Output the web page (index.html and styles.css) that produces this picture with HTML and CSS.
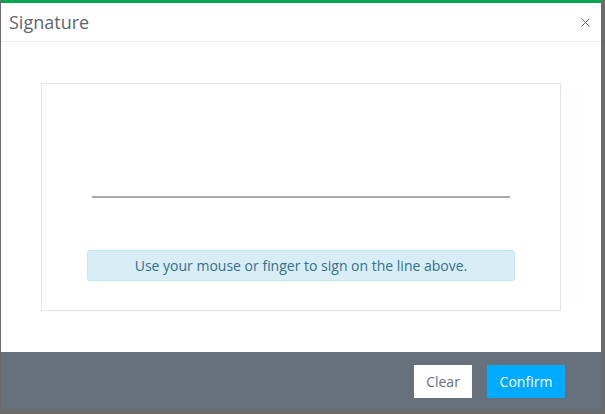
FILE: index.html
```html
<!DOCTYPE html>
<html lang="en">
<head>
  <meta charset="UTF-8">
  <title>Signature</title>
  <link rel="stylesheet" href="styles.css">
</head>
<body>
  <div class="modal">
    <div class="modal-header">
      <h4 class="modal-title">Signature</h4>
      <button class="close" aria-label="Close">
        <svg width="9" height="9" viewBox="0 0 9 9"><path d="M0.5 0.5L8.5 8.5M8.5 0.5L0.5 8.5" stroke="#666" stroke-width="1" fill="none"/></svg>
      </button>
    </div>
    <div class="modal-body">
      <div class="sign-box">
        <div class="sign-line"></div>
        <div class="alert-info">Use your mouse or finger to sign on the line above.</div>
      </div>
    </div>
    <div class="modal-footer">
      <button class="btn btn-clear">Clear</button>
      <button class="btn btn-confirm">Confirm</button>
    </div>
  </div>
</body>
</html>
```

FILE: styles.css
```css
body {
  margin: 0;
  background: #6b6b6b;
  font-family: 'Open Sans', sans-serif;
  height: 414px;
  overflow: hidden;
}
.modal {
  width: 600px;
  margin-left: 1px;
  background: #ffffff;
  border-top: 3px solid #00a651;
}
.modal-header {
  height: 38px;
  border-bottom: 1px solid #eeeeee;
  display: flex;
  align-items: center;
  justify-content: space-between;
  padding: 0 11px 0 8px;
}
.modal-title {
  margin: 0;
  font-size: 18px;
  font-weight: normal;
  color: #5c6670;
}
.close {
  background: none;
  border: none;
  padding: 0;
  display: flex;
  cursor: pointer;
}
.modal-body {
  padding: 41px 40px;
}
.sign-box {
  height: 226px;
  border: 1px solid #dfe6e6;
  padding: 0 45px;
  display: flex;
  flex-direction: column;
}
.sign-line {
  margin: 112px 5px 0;
  height: 2px;
  background: #a9a9a9;
}
.alert-info {
  margin-top: 52px;
  height: 29px;
  line-height: 29px;
  background: #d9edf7;
  border: 1px solid #bce8f1;
  border-radius: 3px;
  color: #31708f;
  font-size: 14px;
  text-align: center;
}
.modal-footer {
  height: 58px;
  background: #66717b;
  display: flex;
  align-items: center;
  justify-content: flex-end;
  gap: 15px;
  padding-right: 36px;
}
.btn {
  height: 33px;
  padding: 0 12px;
  border: none;
  font-family: 'Open Sans', sans-serif;
  font-size: 14px;
  cursor: pointer;
}
.btn-clear {
  width: 58px;
  background: #ffffff;
  color: #67717b;
}
.btn-confirm {
  width: 78px;
  background: #00aaff;
  color: #ffffff;
}
```
